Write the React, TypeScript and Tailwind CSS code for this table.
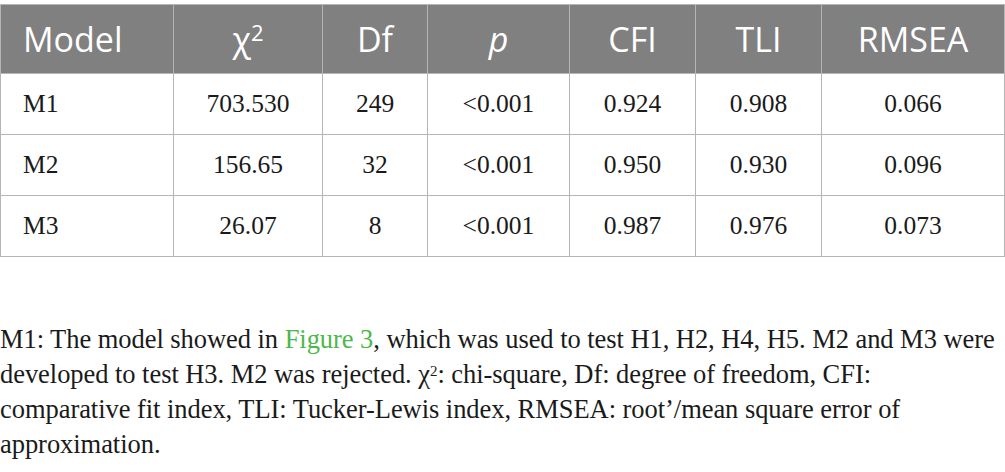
const header = ["Model", "χ2", "Df", "p", "CFI", "TLI", "RMSEA"];

const rows = [
  ["M1", "703.530", "249", "<0.001", "0.924", "0.908", "0.066"],
  ["M2", "156.65", "32", "<0.001", "0.950", "0.930", "0.096"],
  ["M3", "26.07", "8", "<0.001", "0.987", "0.976", "0.073"],
];

const widths = ["w-[173px]", "w-[149px]", "w-[105px]", "w-[142px]", "w-[126px]", "w-[126px]", "w-[183px]"];

function HeadCell({ label, first }: { label: string; first: boolean }) {
  let content: React.ReactNode = label;
  if (label === "χ2") {
    content = (
      <span>
        χ<sup className="text-[22px]">2</sup>
      </span>
    );
  }
  if (label === "p") content = <i>p</i>;
  return (
    <th
      className={
        "border border-[#b5b5b5] font-normal text-white " +
        (first ? "text-left pl-[22px]" : "text-center")
      }
    >
      {content}
    </th>
  );
}

export default function App() {
  return (
    <div className="w-[1005px] h-[472px] bg-white overflow-hidden pt-[4px]">
      <table className="w-[1005px] table-fixed border-collapse">
        <colgroup>
          {widths.map((w, i) => (
            <col key={i} className={w} />
          ))}
        </colgroup>
        <thead>
          <tr className="h-[69px] bg-[#808080] text-[34px] font-['Open_Sans',sans-serif]">
            {header.map((h, i) => (
              <HeadCell key={h} label={h} first={i === 0} />
            ))}
          </tr>
        </thead>
        <tbody className="font-['Liberation_Serif',serif] text-[25.5px] text-[#1a1a1a]">
          {rows.map((r) => (
            <tr key={r[0]} className="h-[61px]">
              {r.map((c, i) => (
                <td
                  key={i}
                  className={
                    "border border-[#b5b5b5] " +
                    (i === 0 ? "text-left pl-[22px]" : "text-center")
                  }
                >
                  {c}
                </td>
              ))}
            </tr>
          ))}
        </tbody>
      </table>

      <p className="mt-[65px] font-['Liberation_Serif',serif] text-[26.5px] leading-[35px] text-[#1a1a1a] whitespace-nowrap tracking-[-0.05px]">
        M1: The model showed in <span className="text-[#4cb84c]">Figure 3</span>, which was used to test H1, H2, H4, H5. M2 and M3 were
        <br />
        developed to test H3. M2 was rejected. χ<sup className="text-[15px]">2</sup>: chi-square, Df: degree of freedom, CFI:
        <br />
        comparative fit index, TLI: Tucker-Lewis index, RMSEA: root’/mean square error of
        <br />
        approximation.
      </p>
    </div>
  );
}
